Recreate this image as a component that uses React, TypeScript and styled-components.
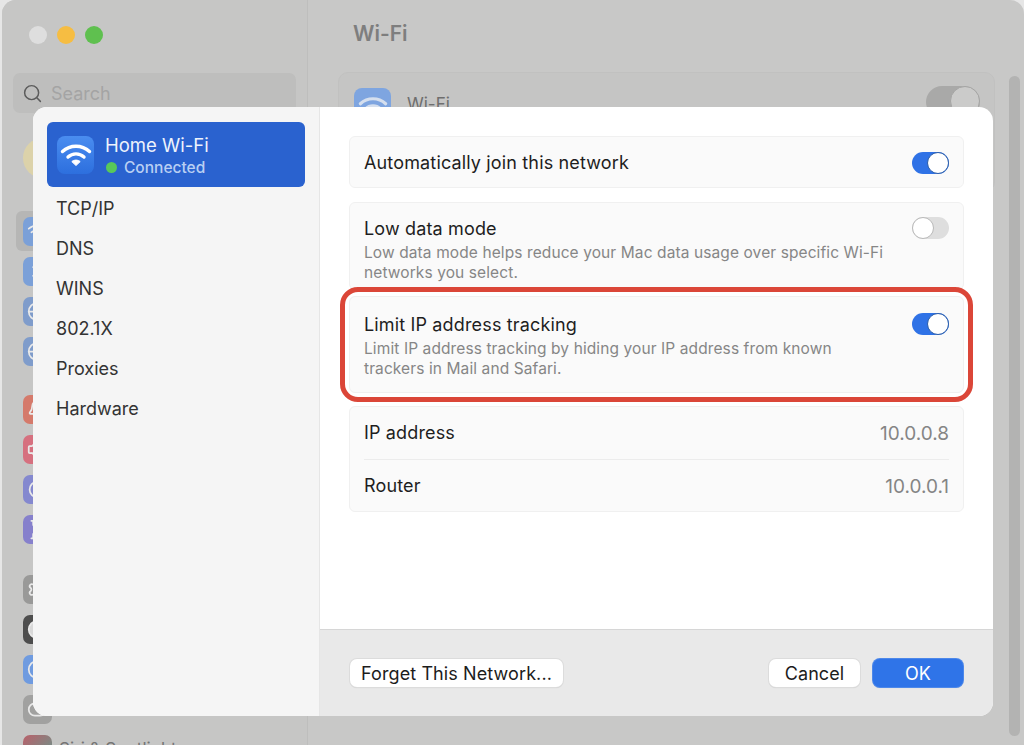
import styled, { createGlobalStyle } from "styled-components";
import {
  Bell,
  Bluetooth,
  Circle,
  Globe,
  Hourglass,
  Moon,
  Search,
  Settings,
  ToggleRight,
  Volume2,
  Wifi,
} from "lucide-react";

const GlobalStyle = createGlobalStyle`
  html, body {
    margin: 0;
    padding: 0;
    background: #e6e6e6;
  }
  body {
    font-family: Inter, "Liberation Sans", sans-serif;
    overflow: hidden;
  }
`;

const WifiGlyph = ({ size, color }: { size: number; color: string }) => (
  <svg width={size} height={size} viewBox="0 0 32 32" fill="none">
    <path d="M2.5 12.5C10.2 5.4 21.8 5.4 29.5 12.5" stroke={color} strokeWidth="3.4" strokeLinecap="round" />
    <path d="M8 18C12.6 13.8 19.4 13.8 24 18" stroke={color} strokeWidth="3.4" strokeLinecap="round" />
    <path d="M16 26.5L11.8 22.6C14.2 20.6 17.8 20.6 20.2 22.6Z" fill={color} stroke={color} strokeLinejoin="round" />
  </svg>
);

const sidebarGroups = [
  {
    gap: 18,
    items: [
      { color: "#7ba0d8", Icon: Wifi },
      { color: "#7ba0d8", Icon: Bluetooth },
      { color: "#7f9ccb", Icon: Globe },
      { color: "#7f9ccb", Icon: Globe },
    ],
  },
  {
    gap: 20,
    items: [
      { color: "#d57a6b", Icon: Bell },
      { color: "#d6707f", Icon: Volume2 },
      { color: "#8488cf", Icon: Moon },
      { color: "#8680cc", Icon: Hourglass },
    ],
  },
  {
    gap: 0,
    items: [
      { color: "#999998", Icon: Settings },
      { color: "#4d4d4d", Icon: Circle, fill: "#d8d8d8" },
      { color: "#6f9be0", Icon: Circle },
      { color: "#a1a1a0", Icon: ToggleRight },
    ],
  },
];

const Toggle = ({ on }: { on?: boolean }) => (
  <Track $on={on}>
    <Knob $on={on} />
  </Track>
);

export default function App() {
  return (
    <>
      <GlobalStyle />
      <Window>
        <Sidebar>
          <Lights>
            <Light $color="#dedede" />
            <Light $color="#f6bd42" />
            <Light $color="#5fc04f" />
          </Lights>
          <SearchField>
            <Search size={21} color="#5c5c5c" strokeWidth={1.7} />
            <SearchText>Search</SearchText>
          </SearchField>
          <Avatar />
          {sidebarGroups.map((group, g) => (
            <IconGroup key={g} $gap={group.gap}>
              {group.items.map(({ color, Icon, fill }, i) => (
                <IconRow key={i} $active={g === 0 && i === 0}>
                  <SideIcon $color={color}>
                    <Icon size={21} color="#e9e9e9" strokeWidth={2} fill={fill ?? "none"} />
                  </SideIcon>
                </IconRow>
              ))}
            </IconGroup>
          ))}
          <SiriRow>
            <SiriIcon />
            <SiriLabel>Siri &amp; Spotlight</SiriLabel>
          </SiriRow>
        </Sidebar>
        <Main>
          <MainTitle>Wi-Fi</MainTitle>
          <WifiCard>
            <WifiBadge>
              <WifiGlyph size={30} color="#d5dfee" />
            </WifiBadge>
            <WifiName>Wi-Fi</WifiName>
            <BackSwitch>
              <BackKnob />
            </BackSwitch>
          </WifiCard>
        </Main>
        <Scrollbar />

        <Dialog>
          <Nav>
            <Selected>
              <NetIcon>
                <WifiGlyph size={32} color="#ffffff" />
              </NetIcon>
              <div>
                <NetName>Home Wi-Fi</NetName>
                <NetStatus>
                  <GreenDot />
                  Connected
                </NetStatus>
              </div>
            </Selected>
            <NavItem>TCP/IP</NavItem>
            <NavItem>DNS</NavItem>
            <NavItem>WINS</NavItem>
            <NavItem>802.1X</NavItem>
            <NavItem>Proxies</NavItem>
            <NavItem>Hardware</NavItem>
          </Nav>
          <RightPane>
            <Content>
              <Card $gap={14}>
                <JoinRow>
                  <Label>Automatically join this network</Label>
                  <Toggle on />
                </JoinRow>
              </Card>
              <Card $gap={6}>
                <OptionRow $top={14} $bottom={6}>
                  <OptionText>
                    <Label>Low data mode</Label>
                    <Hint>Low data mode helps reduce your Mac data usage over specific Wi-Fi networks you select.</Hint>
                  </OptionText>
                  <Toggle />
                </OptionRow>
              </Card>
              <Card $gap={13}>
                <OptionRow $top={16} $bottom={13}>
                  <OptionText>
                    <Label>Limit IP address tracking</Label>
                    <Hint>Limit IP address tracking by hiding your IP address from known trackers in Mail and Safari.</Hint>
                  </OptionText>
                  <Toggle on />
                </OptionRow>
                <Highlight />
              </Card>
              <Card>
                <InfoRow>
                  <Label>IP address</Label>
                  <Value>10.0.0.8</Value>
                </InfoRow>
                <InfoDivider />
                <InfoRow>
                  <Label>Router</Label>
                  <Value>10.0.0.1</Value>
                </InfoRow>
              </Card>
            </Content>
            <FooterBar>
              <Button $width={213}>Forget This Network...</Button>
              <FooterRight>
                <Button $width={91}>Cancel</Button>
                <Button $width={90} $primary>
                  OK
                </Button>
              </FooterRight>
            </FooterBar>
          </RightPane>
        </Dialog>
      </Window>
    </>
  );
}

const Window = styled.div`
  position: relative;
  display: flex;
  width: 1022px;
  height: 745px;
  margin-left: 2px;
  background: #c8c8c7;
  border-radius: 14px 14px 0 0;
  overflow: hidden;
`;

const Sidebar = styled.div`
  width: 306px;
  flex-shrink: 0;
  box-sizing: border-box;
  padding: 26px 11px 0;
  background: #c6c6c5;
  border-right: 1px solid #bebebd;
`;

const Lights = styled.div`
  display: flex;
  gap: 10px;
  height: 47px;
  padding-left: 16px;
`;

const Light = styled.div<{ $color: string }>`
  width: 18px;
  height: 18px;
  border-radius: 50%;
  background: ${(p) => p.$color};
`;

const SearchField = styled.div`
  display: flex;
  align-items: center;
  gap: 8px;
  height: 40px;
  box-sizing: border-box;
  padding-left: 9px;
  background: #bebebd;
  border-radius: 7px;
`;

const SearchText = styled.span`
  padding-top: 1px;
  font-size: 18px;
  color: #a4a4a4;
`;

const Avatar = styled.div`
  width: 40px;
  height: 40px;
  margin: 25px 0 33px 10px;
  border-radius: 50%;
  background: radial-gradient(circle at 26px 10px, #5b5346 0 3px, #dcd2aa 5px);
`;

const IconGroup = styled.div<{ $gap: number }>`
  margin-bottom: ${(p) => p.$gap}px;
`;

const IconRow = styled.div<{ $active?: boolean }>`
  display: flex;
  align-items: center;
  height: 40px;
  margin-left: 3px;
  padding-left: 7px;
  border-radius: 6px;
  background: ${(p) => (p.$active ? "#b6b6b5" : "transparent")};
`;

const SideIcon = styled.div<{ $color: string }>`
  display: flex;
  align-items: center;
  justify-content: center;
  width: 29px;
  height: 29px;
  flex-shrink: 0;
  border-radius: 7px;
  background: ${(p) => p.$color};
`;

const SiriRow = styled.div`
  display: flex;
  align-items: center;
  gap: 7px;
  height: 40px;
  padding-left: 10px;
`;

const SiriIcon = styled.div`
  width: 29px;
  height: 29px;
  flex-shrink: 0;
  border-radius: 7px;
  background: linear-gradient(135deg, #b9606a, #5f9d90);
`;

const SiriLabel = styled.span`
  font-size: 17px;
  color: #747474;
`;

const Main = styled.div`
  flex: 1;
  padding: 0 14px 0 30px;
`;

const MainTitle = styled.div`
  height: 72px;
  line-height: 67px;
  padding-left: 15px;
  font-size: 21px;
  font-weight: 600;
  color: #7e7e7e;
`;

const WifiCard = styled.div`
  display: flex;
  align-items: flex-start;
  height: 120px;
  box-sizing: border-box;
  padding: 13px 14px 0 15px;
  background: #c5c5c4;
  border-radius: 10px;
  border: 1px solid #c1c1c0;
`;

const WifiBadge = styled.div`
  display: flex;
  align-items: center;
  justify-content: center;
  width: 37px;
  height: 37px;
  margin-top: 2px;
  border-radius: 8px;
  background: #7ea5e0;
`;

const WifiName = styled.div`
  margin: 8px 0 0 16px;
  font-size: 17px;
  color: #6e6e6e;
`;

const BackSwitch = styled.div`
  position: relative;
  width: 54px;
  height: 32px;
  margin-left: auto;
  border-radius: 16px;
  background: #a9a9a8;
`;

const BackKnob = styled.div`
  position: absolute;
  top: 0;
  right: 0;
  width: 28px;
  height: 28px;
  border-radius: 50%;
  background: #cbcbca;
  border: 1px solid #a5a5a4;
`;

const Scrollbar = styled.div`
  width: 11px;
  height: 660px;
  margin: 76px 4px 0 0;
  flex-shrink: 0;
  border-radius: 6px;
  background: #b3b3b2;
`;

const Dialog = styled.div`
  position: absolute;
  left: 31px;
  top: 107px;
  display: flex;
  width: 960px;
  height: 609px;
  border-radius: 14px;
  overflow: hidden;
  background: #ffffff;
`;

const Nav = styled.div`
  width: 287px;
  flex-shrink: 0;
  padding: 15px 0 0 14px;
  box-sizing: border-box;
  background: #f5f5f5;
  border-right: 1px solid #e6e6e6;
`;

const Selected = styled.div`
  display: flex;
  align-items: center;
  gap: 11px;
  width: 258px;
  height: 65px;
  box-sizing: border-box;
  padding-left: 10px;
  background: #2a62cf;
  border-radius: 6px;
`;

const NetIcon = styled.div`
  display: flex;
  align-items: center;
  justify-content: center;
  width: 37px;
  height: 38px;
  border-radius: 8px;
  background: linear-gradient(180deg, #4a8df0, #2d6fde);
`;

const NetName = styled.div`
  font-size: 18.5px;
  line-height: 23px;
  margin-top: 3px;
  color: #eef3fc;
`;

const NetStatus = styled.div`
  display: flex;
  align-items: center;
  gap: 7px;
  font-size: 15.5px;
  line-height: 21px;
  font-weight: 500;
  color: #b9cff3;
`;

const GreenDot = styled.span`
  width: 11px;
  height: 11px;
  margin-left: 1px;
  border-radius: 50%;
  background: #58c85a;
`;

const NavItem = styled.div`
  height: 40px;
  line-height: 44px;
  padding-left: 9px;
  font-size: 18px;
  color: #333333;
`;

const RightPane = styled.div`
  display: flex;
  flex-direction: column;
  flex: 1;
  min-width: 0;
`;

const Content = styled.div`
  flex: 1;
  padding: 29px 29px 0;
`;

const Card = styled.div<{ $gap?: number }>`
  position: relative;
  margin-bottom: ${(p) => p.$gap ?? 0}px;
  padding: 0 14px;
  background: #fafafa;
  border: 1px solid #f0f0f0;
  border-radius: 6px;
`;

const JoinRow = styled.div`
  display: flex;
  align-items: center;
  justify-content: space-between;
  height: 48px;
  padding-top: 2px;
`;

const OptionRow = styled.div<{ $top: number; $bottom: number }>`
  display: flex;
  align-items: flex-start;
  justify-content: space-between;
  padding-top: ${(p) => p.$top}px;
  padding-bottom: ${(p) => p.$bottom}px;
`;

const OptionText = styled.div`
  width: 525px;
`;

const Label = styled.div`
  font-size: 18px;
  line-height: 24px;
  letter-spacing: 0.15px;
  color: #1e1e1e;
`;

const Hint = styled.div`
  margin-top: 2px;
  font-size: 15.5px;
  line-height: 20px;
  letter-spacing: 0.1px;
  color: #868686;
`;

const Highlight = styled.div`
  position: absolute;
  inset: -10px;
  border: 5px solid #db4638;
  border-radius: 18px;
  pointer-events: none;
`;

const InfoRow = styled.div`
  display: flex;
  align-items: center;
  justify-content: space-between;
  height: 50px;
  padding-top: 1px;
`;

const InfoDivider = styled.div`
  height: 1px;
  margin-top: 1px;
  background: #ececec;
`;

const Value = styled.div`
  font-size: 19px;
  color: #858585;
`;

const Track = styled.div<{ $on?: boolean }>`
  display: flex;
  justify-content: ${(p) => (p.$on ? "flex-end" : "flex-start")};
  align-items: center;
  flex-shrink: 0;
  width: 37px;
  height: 22px;
  border-radius: 11px;
  background: ${(p) => (p.$on ? "#2f72e6" : "#dedede")};
`;

const Knob = styled.div<{ $on?: boolean }>`
  width: 20px;
  height: 20px;
  border-radius: 50%;
  background: #ffffff;
  border: 1px solid ${(p) => (p.$on ? "#2b5da8" : "#b9b9b9")};
`;

const FooterBar = styled.div`
  display: flex;
  align-items: center;
  justify-content: space-between;
  flex-shrink: 0;
  height: 87px;
  box-sizing: border-box;
  padding: 0 30px;
  background: #e9e9e9;
  border-top: 1px solid #d6d6d6;
`;

const FooterRight = styled.div`
  display: flex;
  gap: 13px;
`;

const Button = styled.button<{ $width: number; $primary?: boolean }>`
  width: ${(p) => p.$width}px;
  height: 28px;
  padding: 0;
  font-family: inherit;
  font-size: 18px;
  letter-spacing: 0.1px;
  border: none;
  border-radius: 7px;
  color: ${(p) => (p.$primary ? "#ffffff" : "#1c1c1c")};
  background: ${(p) => (p.$primary ? "#2f74e8" : "#ffffff")};
  box-shadow: 0 0 0 1px ${(p) => (p.$primary ? "#4d88ea" : "#dcdcdc")}, 0 1px 1px rgba(0, 0, 0, 0.15);
`;
